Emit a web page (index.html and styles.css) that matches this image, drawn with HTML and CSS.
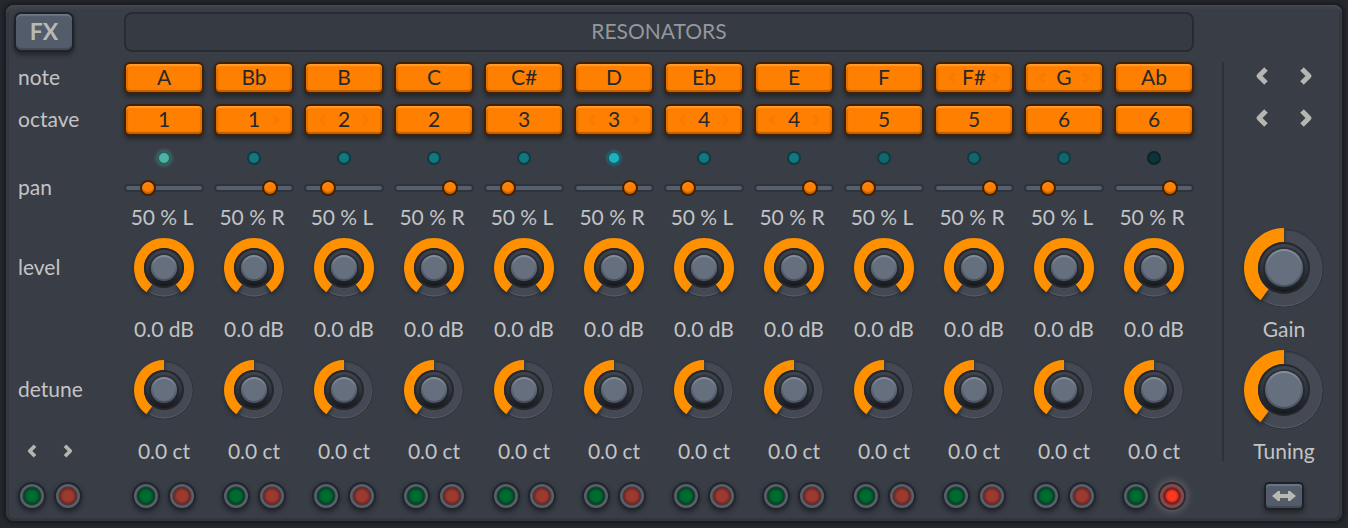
FILE: index.html
```html
<!DOCTYPE html>
<html lang="en">
<head>
    <meta charset="UTF-8">
    <meta name="viewport" content="width=device-width, initial-scale=1.0">
    <title>Resonators</title>
    <link rel="stylesheet" href="styles.css">
</head>
<body>
    <!-- shared gradients and icons -->
    <svg class="defs" aria-hidden="true">
        <defs>
            <linearGradient id="well" x1="0" y1="0" x2="0" y2="1">
                <stop offset="0" stop-color="#3f444e"/>
                <stop offset="0.5" stop-color="#30343c"/>
                <stop offset="1" stop-color="#17191c"/>
            </linearGradient>
            <linearGradient id="skirt" x1="0" y1="0" x2="0" y2="1">
                <stop offset="0" stop-color="#2e333b"/>
                <stop offset="1" stop-color="#1d2024"/>
            </linearGradient>
            <linearGradient id="rim" x1="0" y1="0" x2="0" y2="1">
                <stop offset="0" stop-color="#8791a0"/>
                <stop offset="0.5" stop-color="#5c6675"/>
                <stop offset="1" stop-color="#495160"/>
            </linearGradient>
            <linearGradient id="edge" x1="0" y1="0" x2="0" y2="1">
                <stop offset="0" stop-color="#363b43"/>
                <stop offset="1" stop-color="#565b66"/>
            </linearGradient>
        </defs>
        <symbol id="left" viewBox="0 0 24 24"><path d="M16 5 L9 12 L16 19" fill="none" stroke="currentColor" stroke-width="5" stroke-linejoin="round"/></symbol>
        <symbol id="right" viewBox="0 0 24 24"><path d="M8 5 L15 12 L8 19" fill="none" stroke="currentColor" stroke-width="5" stroke-linejoin="round"/></symbol>
    </svg>

    <main class="panel">
        <header class="top">
            <button class="fx">FX</button>
            <h1 class="title">RESONATORS</h1>
        </header>

        <div class="rack">
            <div class="strip labels">
                <span>note</span>
                <span>octave</span>
                <span></span>
                <span>pan</span>
                <span></span>
                <span>level</span>
                <span></span>
                <span>detune</span>
                <div class="pair">
                    <button class="arrow small" aria-label="Previous"><svg><use href="#left"/></svg></button>
                    <button class="arrow small" aria-label="Next"><svg><use href="#right"/></svg></button>
                </div>
                <div class="pair">
                    <button class="lamp green" aria-label="All on"></button>
                    <button class="lamp red" aria-label="All off"></button>
                </div>
            </div>

            <div class="channels" id="channels"></div>

            <div class="strip side">
                <div class="arrows">
                    <button class="arrow" aria-label="Notes down"><svg><use href="#left"/></svg></button>
                    <button class="arrow" aria-label="Notes up"><svg><use href="#right"/></svg></button>
                </div>
                <div class="arrows">
                    <button class="arrow" aria-label="Octaves down"><svg><use href="#left"/></svg></button>
                    <button class="arrow" aria-label="Octaves up"><svg><use href="#right"/></svg></button>
                </div>
                <span></span>
                <span></span>
                <span></span>
                <div class="knob big" data-value="50" data-id="gain" data-name="Gain"></div>
                <label for="gain">Gain</label>
                <div class="knob big" data-value="50" data-id="tuning" data-name="Tuning"></div>
                <label for="tuning">Tuning</label>
                <button class="swap" aria-label="Swap">
                    <svg viewBox="0 0 26 12"><path d="M1 6 L7 1 L9 1 L9 4 L17 4 L17 1 L19 1 L25 6 L19 11 L17 11 L17 8 L9 8 L9 11 L7 11 Z" fill="currentColor"/></svg>
                </button>
            </div>
        </div>
    </main>

    <script src="script.js"></script>
</body>
</html>
```

FILE: styles.css
```css
* {
    box-sizing: border-box;
}

body {
    margin: 0;
    background: #25282d;
    color: #c3c4c5;
    font-family: Lato, sans-serif;
    font-size: 21px;
    line-height: 26px;
}

button {
    padding: 0;
    border: none;
    background: none;
    font: inherit;
    cursor: pointer;
}

.defs {
    position: absolute;
    width: 0;
    height: 0;
}

.panel {
    margin: 5px 6px 7px;
    padding: 7px 0 12px;
    background: #383d46;
    border-radius: 8px;
    box-shadow: inset 0 3px 3px #454954, inset 0 0 0 3px #31353c, 0 0 3px 3px #1c1e22;
}

.top,
.rack {
    display: grid;
    grid-template-columns: 118px 1fr 148px;
}

.top {
    padding-bottom: 5px;
}

.fx {
    width: 60px;
    height: 40px;
    margin-left: 8px;
    padding-bottom: 2px;
    border: 2px solid #1e2126;
    border-radius: 7px;
    background: #535c6b;
    box-shadow: inset 0 2px 1px #6b7584, inset 0 -2px 1px #434a56, 0 3px 4px #24272c;
    color: #b9b9b4;
    font-weight: bold;
    font-size: 23px;
}

.title {
    margin: 0;
    height: 40px;
    border: 2px solid #282b31;
    border-radius: 8px;
    background: #353a43;
    color: #94979b;
    font-size: 21px;
    font-weight: normal;
    line-height: 34px;
    text-align: center;
}

/* every strip shares the same rows so the lines match up */
.strip {
    display: grid;
    grid-template-rows: 42px 42px 34px 26px 34px 66px 58px 62px 62px 26px;
    align-items: center;
    justify-items: center;
    white-space: nowrap;
}

.strip span,
.strip label {
    padding-bottom: 2px;
}

.channels {
    display: grid;
    grid-template-columns: repeat(12, 1fr);
    gap: 10px;
}

.labels {
    padding-left: 12px;
    justify-items: start;
}

/* note and octave */
.step {
    display: flex;
    align-items: center;
    justify-content: space-between;
    width: 100%;
    height: 32px;
    padding: 0 8px;
    border: 2px solid #432100;
    border-radius: 6px;
    background: #ff8000;
    box-shadow: inset 0 2px 1px #ff9a2c, inset 0 -2px 1px #bd6000, inset 2px 0 1px #df7000, inset -2px 0 1px #df7000, 0 3px 4px #24272c;
    color: #26282c;
}

.step svg {
    width: 16px;
    height: 16px;
    color: #f97a00;
}

.step .off {
    visibility: hidden;
}

.dot {
    width: 14px;
    height: 14px;
    border: 2px solid #0e3c43;
    border-radius: 50%;
    background: #137780;
}

.dot.dim {
    border-color: #0a2529;
    background: #0b3338;
}

.dot.mid {
    background: #12676c;
}

.dot.lit {
    border-color: #17606a;
    background: #21b0be;
    box-shadow: 0 0 3px #21838d;
}

.dot.pale {
    border-color: #285f5d;
    background: #4db3a5;
    box-shadow: 0 0 4px #4f9083;
}

.pan {
    appearance: none;
    width: 100%;
    height: 16px;
    margin: 0;
    background: none;
}

.pan::-webkit-slider-runnable-track {
    height: 8px;
    border: 2px solid #2f333a;
    border-radius: 4px;
    background: #555f6f;
}

.pan::-webkit-slider-thumb {
    appearance: none;
    width: 16px;
    height: 16px;
    margin-top: -6px;
    border: 2px solid #432100;
    border-radius: 50%;
    background: #ff8000;
    box-shadow: inset 0 1px 1px #ff9a2c, inset 0 -2px 1px #c56400;
}

.strip .pan-value {
    padding-right: 4px;
}

.knob {
    position: relative;
    width: 60px;
    height: 60px;
}

.knob.big {
    width: 80px;
    height: 80px;
}

.knob svg {
    display: block;
    width: 100%;
    height: 100%;
    overflow: visible;
}

.knob .arc {
    filter: drop-shadow(0 3px 2px #25282d);
}

/* invisible slider on top of the drawn knob */
.knob input {
    position: absolute;
    inset: 0;
    width: 100%;
    height: 100%;
    margin: 0;
    opacity: 0;
    cursor: pointer;
}

.pair {
    display: flex;
    gap: 8px;
}

.lamp {
    width: 28px;
    height: 28px;
    border: 2px solid #22252a;
    border-radius: 50%;
    box-shadow: 0 2px 4px #22252a;
}

.lamp.green {
    background: radial-gradient(circle, #006b30 5px, #00441f 8px, #2c3c3c 9px, #5a6270 10px, #555d6a 12px);
}

.lamp.red {
    background: radial-gradient(circle, #9b3a31 5px, #702821 8px, #483a40 9px, #5a6270 10px, #555d6a 12px);
}

.lamp.red.lit {
    border-color: #34282a;
    background: radial-gradient(circle, #ff3a20 4px, #d92a18 6px, #64211f 7px, #70272a 8px, #8f474a 10px, #6a5358 12px);
    box-shadow: 0 0 8px 1px #6c6a70;
}

.side {
    position: relative;
    margin-left: 28px;
    padding-left: 4px;
}

.side::before {
    content: "";
    position: absolute;
    top: 5px;
    bottom: 48px;
    left: 0;
    width: 2px;
    background: #2c3037;
}

.arrows {
    display: flex;
    gap: 20px;
    padding-bottom: 4px;
}

.arrow {
    width: 24px;
    height: 24px;
    color: #b5b5b1;
}

.arrow.small {
    width: 28px;
    height: 26px;
    padding: 3px 5px 5px;
}

.arrow svg {
    display: block;
    width: 100%;
    height: 100%;
}

.swap {
    display: flex;
    align-items: center;
    justify-content: center;
    width: 40px;
    height: 28px;
    border: 2px solid #1e2126;
    border-radius: 5px;
    background: #535c6b;
    box-shadow: inset 0 2px 1px #6b7584, inset 0 -2px 1px #434a56, 0 3px 4px #24272c;
    color: #b9b9b4;
}

.swap svg {
    width: 26px;
    height: 12px;
}
```

FILE: script.js
```javascript
const notes = ['A', 'Bb', 'B', 'C', 'C#', 'D', 'Eb', 'E', 'F', 'F#', 'G', 'Ab'];
const octaves = [1, 1, 2, 2, 3, 3, 4, 4, 5, 5, 6, 6];
const dots = ['pale', '', '', '', '', 'lit', '', '', 'mid', 'mid', 'mid', 'dim'];
// which faint arrows are showing: l = left, r = right
const noteHints = ['', '', '', '', '', '', '', '', '', 'lr', 'lr', ''];
const octaveHints = ['', 'r', 'lr', '', '', 'lr', 'lr', 'lr', '', '', '', ''];

function step(text, name, hint) {
    const left = hint.includes('l') ? '' : 'off';
    const right = hint.includes('r') ? '' : 'off';
    return `<button class="step" aria-label="${name} ${text}">
        <svg class="${left}"><use href="#left"/></svg>
        <span>${text}</span>
        <svg class="${right}"><use href="#right"/></svg>
    </button>`;
}

// point on a circle, angle in degrees clockwise from the bottom
function point(c, r, angle) {
    const a = angle * Math.PI / 180;
    return (c - r * Math.sin(a)).toFixed(2) + ' ' + (c + r * Math.cos(a)).toFixed(2);
}

function drawKnob(el) {
    const big = el.classList.contains('big');
    const c = big ? 40 : 30;
    const inner = big ? 26 : 20;
    const cap = big ? 19 : 13;
    const value = Number(el.dataset.value);
    const end = 36 + 288 * value / 100;
    const mid = (c + inner) / 2;
    const large = end - 36 > 180 ? 1 : 0;
    el.innerHTML = `<svg viewBox="0 0 ${c * 2} ${c * 2}" aria-hidden="true">
        <circle cx="${c}" cy="${c}" r="${c - 1}" fill="#444953" stroke="#2e3239" stroke-width="1"/>
        <circle cx="${c}" cy="${c}" r="${c - 2}" fill="none" stroke="url(#edge)" stroke-width="1"/>
        <path class="arc" d="M${point(c, mid, 36)} A${mid} ${mid} 0 ${large} 1 ${point(c, mid, end)}" fill="none" stroke="#ff9100" stroke-width="${c - inner}"/>
        <circle cx="${c}" cy="${c}" r="${inner}" fill="#24272d"/>
        <circle cx="${c}" cy="${c}" r="${inner - 2}" fill="url(#well)"/>
        <circle cx="${c}" cy="${c}" r="${cap + 2}" fill="url(#skirt)"/>
        <circle cx="${c}" cy="${c}" r="${cap}" fill="url(#rim)"/>
        <circle cx="${c}" cy="${c}" r="${cap - 2}" fill="#656f7e"/>
    </svg>
    <input type="range" id="${el.dataset.id}" value="${value}" aria-label="${el.dataset.name}">`;
}

const channels = document.getElementById('channels');

notes.forEach((note, i) => {
    const isLeft = i % 2 === 0;
    const lit = i === 11 ? 'lit' : '';
    channels.innerHTML += `<div class="strip">
        ${step(note, 'Note', noteHints[i])}
        ${step(octaves[i], 'Octave', octaveHints[i])}
        <i class="dot ${dots[i]}"></i>
        <input class="pan" id="pan${i}" type="range" value="${isLeft ? 23 : 77}">
        <label class="pan-value" for="pan${i}">50 % ${isLeft ? 'L' : 'R'}</label>
        <div class="knob" data-value="100" data-id="level${i}" data-name="Level"></div>
        <label for="level${i}">0.0 dB</label>
        <div class="knob" data-value="50" data-id="detune${i}" data-name="Detune"></div>
        <label for="detune${i}">0.0 ct</label>
        <div class="pair">
            <button class="lamp green" aria-label="On"></button>
            <button class="lamp red ${lit}" aria-label="Off"></button>
        </div>
    </div>`;
});

document.querySelectorAll('.knob').forEach(drawKnob);
```
